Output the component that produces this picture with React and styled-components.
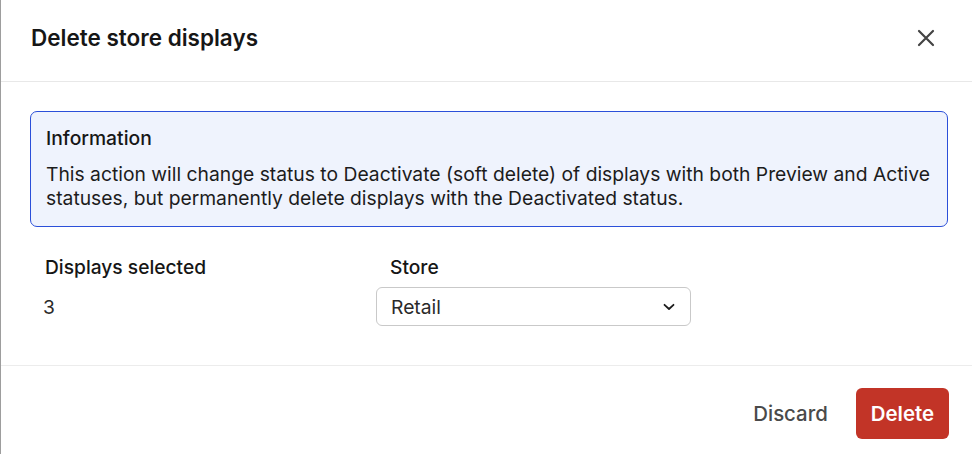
import styled, { createGlobalStyle } from 'styled-components';

const GlobalStyle = createGlobalStyle`
  html, body {
    margin: 0;
    padding: 0;
    background: #ffffff;
  }
  body {
    font-family: Inter, "Noto Sans", sans-serif;
    color: #1c1c1c;
    -webkit-font-smoothing: antialiased;
  }
`;

function CloseIcon() {
  return (
    <svg width="18" height="18" viewBox="0 0 18 18" fill="none">
      <path d="M2 2 L16 16 M16 2 L2 16" stroke="#444" strokeWidth="2.2" strokeLinecap="round" />
    </svg>
  );
}

function Chevron() {
  return (
    <svg width="12" height="8" viewBox="0 0 12 8" fill="none">
      <path d="M1.5 1.8 L6 6 L10.5 1.8" stroke="#1c1c1c" strokeWidth="1.8" strokeLinecap="round" strokeLinejoin="round" />
    </svg>
  );
}

export default function App() {
  return (
    <>
      <GlobalStyle />
      <Dialog>
        <Header>
          <Title>Delete store displays</Title>
          <CloseButton aria-label="Close">
            <CloseIcon />
          </CloseButton>
        </Header>
        <Body>
          <Notice>
            <NoticeTitle>Information</NoticeTitle>
            <NoticeText>
              This action will change status to Deactivate (soft delete) of displays with both Preview and Active
              statuses, but permanently delete displays with the Deactivated status.
            </NoticeText>
          </Notice>
          <Fields>
            <Field>
              <Label>Displays selected</Label>
              <Value>3</Value>
            </Field>
            <Field>
              <Label $inset>Store</Label>
              <Select>
                <span>Retail</span>
                <Chevron />
              </Select>
            </Field>
          </Fields>
        </Body>
        <Footer>
          <Button>Discard</Button>
          <Button $danger>Delete</Button>
        </Footer>
      </Dialog>
    </>
  );
}

const Dialog = styled.div`
  height: 454px;
  box-sizing: border-box;
  border-left: 1px solid #9d9d9d;
  display: flex;
  flex-direction: column;
  background: #fff;
`;

const Header = styled.div`
  height: 82px;
  box-sizing: border-box;
  display: flex;
  align-items: center;
  justify-content: space-between;
  padding: 0 37px 6px 30px;
  border-bottom: 1px solid #e8e8e8;
`;

const Title = styled.h2`
  margin: 0;
  font-size: 22.5px;
  font-weight: 600;
  color: #161616;
`;

const CloseButton = styled.button`
  border: none;
  background: none;
  padding: 0;
  display: flex;
  cursor: pointer;
`;

const Body = styled.div`
  padding: 29px 24px 0 29px;
  height: 284px;
  box-sizing: border-box;
  border-bottom: 1px solid #ececec;
`;

const Notice = styled.div`
  border: 1px solid #2b4fd9;
  border-radius: 7px;
  background: #eff3fd;
  padding: 14px 6px 16px 15px;
`;

const NoticeTitle = styled.div`
  font-size: 19.3px;
  line-height: 24px;
  font-weight: 500;
  color: #161616;
  margin-bottom: 12px;
`;

const NoticeText = styled.p`
  margin: 0;
  font-size: 19.3px;
  line-height: 24px;
  color: #1c1c1c;
`;

const Fields = styled.div`
  display: grid;
  grid-template-columns: 346px 315px;
  margin-top: 28px;
`;

const Field = styled.div`
  display: flex;
  flex-direction: column;
  gap: 8px;
`;

const Label = styled.div`
  font-size: 19.2px;
  line-height: 24px;
  font-weight: 500;
  color: #161616;
  padding-left: ${(p) => (p.$inset ? '14px' : '15px')};
`;

const Value = styled.div`
  height: 39px;
  display: flex;
  align-items: center;
  padding-left: 13px;
  font-size: 19.2px;
  color: #2a2a2a;
`;

const Select = styled.div`
  height: 39px;
  box-sizing: border-box;
  border: 1px solid #c9c9c9;
  border-radius: 6px;
  display: flex;
  align-items: center;
  justify-content: space-between;
  padding: 0 15px 0 14px;
  font-size: 19.3px;
  color: #2a2a2a;
`;

const Footer = styled.div`
  display: flex;
  justify-content: flex-end;
  align-items: flex-start;
  gap: 13px;
  padding: 22px 23px 0 0;
`;

const Button = styled.button`
  height: 51px;
  padding: 0 15px;
  border: none;
  border-radius: 6px;
  font-family: Inter, "Noto Sans", sans-serif;
  font-size: 20.4px;
  font-weight: ${(p) => (p.$danger ? 600 : 500)};
  color: ${(p) => (p.$danger ? '#ffffff' : '#4a4a4a')};
  background: ${(p) => (p.$danger ? '#c23427' : 'transparent')};
  cursor: pointer;
`;
